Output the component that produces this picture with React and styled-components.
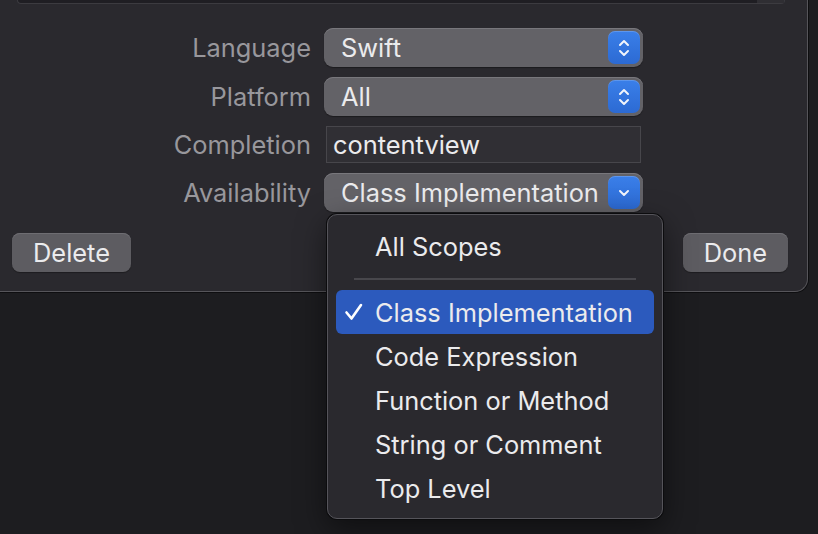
import React from "react";
import styled, { createGlobalStyle } from "styled-components";

const GlobalStyle = createGlobalStyle`
  html, body {
    margin: 0;
    padding: 0;
    background: #1d1d20;
    font-family: Inter, "Noto Sans", sans-serif;
    -webkit-font-smoothing: antialiased;
  }
`;

const scopes = [
  "Code Expression",
  "Function or Method",
  "String or Comment",
  "Top Level",
];

export default function App() {
  return (
    <>
      <GlobalStyle />
      <Page>
        <Dialog>
          <TopBox>
            <TopScroll />
          </TopBox>
          <Form>
            <Label>Language</Label>
            <Popup>
              <PopupText>Swift</PopupText>
              <Stepper>
                <UpDown />
              </Stepper>
            </Popup>
            <Label>Platform</Label>
            <Popup>
              <PopupText>All</PopupText>
              <Stepper>
                <UpDown />
              </Stepper>
            </Popup>
            <Label>Completion</Label>
            <Field>contentview</Field>
            <Label>Availability</Label>
            <Popup>
              <PopupText>Class Implementation</PopupText>
              <Stepper>
                <Chevron />
              </Stepper>
            </Popup>
          </Form>
          <Buttons>
            <Button>Delete</Button>
            <Button>Done</Button>
          </Buttons>
        </Dialog>
        <Menu>
          <Item>All Scopes</Item>
          <Separator />
          <Item selected>
            <Check />
            Class Implementation
          </Item>
          {scopes.map((s) => (
            <Item key={s}>{s}</Item>
          ))}
        </Menu>
      </Page>
    </>
  );
}

function UpDown() {
  return (
    <svg width="14" height="22" viewBox="0 0 14 22" fill="none">
      <path
        d="M3 8 L7 4 L11 8 M3 14 L7 18 L11 14"
        stroke="#f2f5fb"
        strokeWidth="2"
        strokeLinecap="round"
        strokeLinejoin="round"
      />
    </svg>
  );
}

function Chevron() {
  return (
    <svg width="14" height="10" viewBox="0 0 14 10" fill="none">
      <path
        d="M3 3 L7 7 L11 3"
        stroke="#f2f5fb"
        strokeWidth="2"
        strokeLinecap="round"
        strokeLinejoin="round"
      />
    </svg>
  );
}

function Check() {
  return (
    <CheckMark width="22" height="22" viewBox="0 0 22 22" fill="none">
      <path
        d="M3.5 11.5 L8.5 17.5 L18 4"
        stroke="#ffffff"
        strokeWidth="2.6"
        strokeLinecap="round"
        strokeLinejoin="round"
      />
    </CheckMark>
  );
}

const Page = styled.div`
  position: relative;
  width: 818px;
  height: 534px;
  overflow: hidden;
`;

const Dialog = styled.div`
  width: 828px;
  margin-left: -20px;
  padding-left: 20px;
  box-sizing: border-box;
  background: #2a292e;
  border-right: 1px solid #56555a;
  border-bottom: 1px solid #56555a;
  border-bottom-right-radius: 13px;
  box-shadow: 0 0 0 1px #0e0e10;
`;

const TopBox = styled.div`
  margin-left: 17px;
  width: 766px;
  height: 3px;
  display: flex;
  justify-content: flex-end;
  background: #1f1e23;
  border: 1px solid #3c3b40;
  border-top: none;
  border-radius: 0 0 6px 6px;
`;

const TopScroll = styled.div`
  width: 27px;
  background: #2f2e33;
`;

const Form = styled.div`
  display: grid;
  grid-template-columns: 311px 319px;
  column-gap: 13px;
  row-gap: 10px;
  padding-top: 24px;
  align-items: center;
`;

const Label = styled.div`
  text-align: right;
  font-size: 25.4px;
  line-height: 1.15;
  color: #98979c;
`;

const Popup = styled.div`
  height: 39px;
  display: flex;
  align-items: center;
  justify-content: space-between;
  padding: 0 3px 0 17px;
  box-sizing: border-box;
  background: #636267;
  border-radius: 9px;
  box-shadow: inset 0 1px 0 #78777c, 0 1px 1px rgba(0, 0, 0, 0.35);
`;

const PopupText = styled.span`
  font-size: 25.4px;
  color: #ebebed;
`;

const Stepper = styled.div`
  width: 32px;
  height: 33px;
  display: flex;
  align-items: center;
  justify-content: center;
  border-radius: 7px;
  background: linear-gradient(#3a7fe9, #2c6ad3);
  box-shadow: inset 0 1px 0 rgba(255, 255, 255, 0.18);
`;

const Field = styled.div`
  height: 37px;
  margin: 0 2px;
  display: flex;
  align-items: center;
  padding-left: 6px;
  box-sizing: border-box;
  background: #302f34;
  border: 1px solid #47464b;
  font-size: 25.4px;
  color: #ebebed;
`;

const Buttons = styled.div`
  display: flex;
  justify-content: space-between;
  padding: 21px 19px 19px 12px;
`;

const Button = styled.div`
  height: 39px;
  padding: 0 21px;
  display: flex;
  align-items: center;
  background: #5d5c61;
  border-radius: 8px;
  box-shadow: inset 0 1px 0 #6e6d72, 0 1px 1px rgba(0, 0, 0, 0.3);
  font-size: 25.4px;
  color: #ebebed;
`;

const Menu = styled.div`
  position: absolute;
  left: 327px;
  top: 214px;
  width: 336px;
  box-sizing: border-box;
  padding: 9px 8px 8px;
  background: #2a292e;
  border: 1px solid #55545a;
  border-radius: 10px;
  box-shadow: 0 0 0 1px #0c0c0e, 0 10px 30px rgba(0, 0, 0, 0.5);
`;

const Item = styled.div`
  position: relative;
  height: 44px;
  display: flex;
  align-items: center;
  padding-left: 39px;
  border-radius: 6px;
  font-size: 25.4px;
  color: #ebebed;
  background: ${(p) => (p.selected ? "#2c5abd" : "transparent")};
`;

const CheckMark = styled.svg`
  position: absolute;
  left: 7px;
  top: 11px;
`;

const Separator = styled.div`
  height: 2px;
  margin: 10px 18px 10px 18px;
  background: #48474c;
`;
